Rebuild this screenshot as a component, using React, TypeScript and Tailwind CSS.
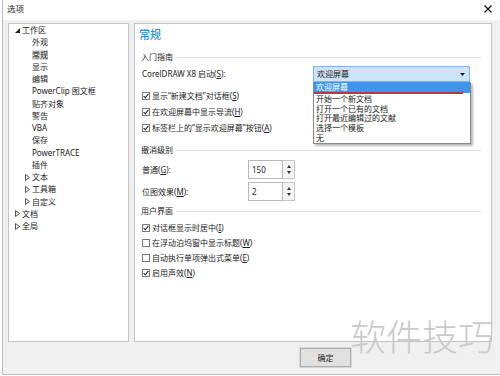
import React from "react";

// ===========================================================

const tree = [
  { label: "工作区", level: 0, icon: "open" },
  { label: "外观", level: 1 },
  { label: "常规", level: 1, selected: true },
  { label: "显示", level: 1 },
  { label: "编辑", level: 1 },
  { label: "PowerClip 图文框", level: 1 },
  { label: "贴齐对象", level: 1 },
  { label: "警告", level: 1 },
  { label: "VBA", level: 1 },
  { label: "保存", level: 1 },
  { label: "PowerTRACE", level: 1 },
  { label: "插件", level: 1 },
  { label: "文本", level: 1, icon: "closed" },
  { label: "工具箱", level: 1, icon: "closed" },
  { label: "自定义", level: 1, icon: "closed" },
  { label: "文档", level: 0, icon: "closed" },
  { label: "全局", level: 0, icon: "closed" },
];

const startItems = ["开始一个新文档", "打开一个已有的文档", "打开最近编辑过的文献", "选择一个模板", "无"];

function TreeIcon({ kind }: { kind?: string }) {
  if (kind === "open")
    return (
      <svg width="5" height="5" viewBox="0 0 5 5" className="mr-[2px]">
        <polygon points="5,0 5,5 0,5" fill="#222" />
      </svg>
    );
  if (kind === "closed")
    return (
      <svg width="5" height="7" viewBox="0 0 5 7" className="mr-[2px]">
        <polygon points="0.5,0.5 4.5,3.5 0.5,6.5" fill="none" stroke="#555" strokeWidth="1" />
      </svg>
    );
  return <span className="w-[5px] mr-[2px]" />;
}

function Check({ checked }: { checked?: boolean }) {
  return (
    <span className="w-[8px] h-[8px] border border-[#7a7a7a] bg-white flex items-center justify-center mr-[2px] shrink-0">
      {checked && (
        <svg width="6" height="6" viewBox="0 0 6 6">
          <path d="M0.6 3.1 L2.3 4.8 L5.4 0.9" fill="none" stroke="#222" strokeWidth="1.1" />
        </svg>
      )}
    </span>
  );
}

function CheckRow({ text, k, checked, h = "h-[16px]" }: { text: string; k: string; checked?: boolean; h?: string }) {
  return (
    <div className={`${h} flex items-center`}>
      <Check checked={checked} />
      <span>
        {text}(<u>{k}</u>)
      </span>
    </div>
  );
}

function Group({ title, cls }: { title: string; cls: string }) {
  return (
    <div className={`${cls} flex items-center -ml-[1px]`}>
      <span className="mr-[3px]">{title}</span>
      <div className="flex-1 h-[1px] bg-[#e2e2e2]" />
    </div>
  );
}

function Spin({ value }: { value: string }) {
  return (
    <div className="w-[47px] h-[19px] flex">
      <div className="w-[35px] h-full border border-[#b9b9b9] bg-white flex items-center pl-[3px]">{value}</div>
      <div className="w-[12px] h-full border border-l-0 border-[#c6c6c6] bg-[#f4f4f4] flex flex-col items-center justify-around py-[2px]">
        <svg width="4" height="3" viewBox="0 0 4 3">
          <polygon points="2,0 4,3 0,3" fill="#333" />
        </svg>
        <svg width="4" height="3" viewBox="0 0 4 3">
          <polygon points="0,0 4,0 2,3" fill="#333" />
        </svg>
      </div>
    </div>
  );
}

export default function App() {
  return (
    <div className="w-[500px] h-[376px] bg-white pl-[2px] pb-[1px] overflow-hidden relative font-['Noto_Sans','Noto_Sans_CJK_SC',sans-serif] text-[8px] text-[#1c1c1c] leading-none">
      <div className="h-full border-l border-b border-[#bdbdbd] flex flex-col">
        {/* title bar */}
        <div className="h-[20px] bg-white flex items-center justify-between pl-[4px] pr-[8px] pb-[2px]">
          <span className="text-[8.5px]">选项</span>
          <svg width="8" height="8" viewBox="0 0 8 8">
            <path d="M0.5 0.5 L7.5 7.5 M7.5 0.5 L0.5 7.5" stroke="#111" strokeWidth="1.2" />
          </svg>
        </div>

        <div className="flex-1 bg-[#f0f0f0] flex flex-col">
          <div className="flex gap-[5px] pl-[5px] pt-[3px]">
            {/* tree */}
            <div className="w-[121px] h-[319px] bg-white border border-[#c4c4c4] flex flex-col">
              {tree.map((t) => (
                <div key={t.label} className={`h-[12.25px] flex items-center ${t.level === 0 ? "pl-[6px]" : "pl-[16px]"}`}>
                  <TreeIcon kind={t.icon} />
                  <span className={t.selected ? "bg-[#dadada] py-[1px]" : ""}>{t.label}</span>
                </div>
              ))}
            </div>

            {/* settings */}
            <div className="w-[358px] h-[319px] bg-white border border-[#c4c4c4] flex flex-col pl-[7px] pr-[10px]">
              <div className="h-[20px] flex items-center -ml-[3px] text-[11px] font-medium text-[#2b8fd6]">常规</div>
              <Group title="入门指南" cls="mt-[4px] h-[18px]" />
              <div className="h-[16px] flex items-center relative">
                <span className="w-[171px]">
                  CorelDRAW X8 启动(<u>S</u>):
                </span>
                <div className="w-[157px] h-[16px] bg-[#cce4f7] border border-[#7cb3e9] flex items-center justify-between pl-[3px] pr-[4px]">
                  <span>欢迎屏幕</span>
                  <svg width="5" height="3" viewBox="0 0 5 3">
                    <polygon points="0,0 5,0 2.5,3" fill="#222" />
                  </svg>
                </div>
                {/* open dropdown list */}
                <div className="absolute left-[171px] top-[16px] w-[158px] h-[62px] bg-white border border-t-0 border-[#8a8a8a] shadow-[2px_2px_2px_rgba(0,0,0,0.28)] flex flex-col z-10">
                  <div className="h-[11px] bg-[#3d96ec] text-white flex items-center pl-[2px] relative">
                    欢迎屏幕
                    <div className="absolute left-0 top-[10px] w-[149px] h-[2px] bg-[#b6394a]" />
                  </div>
                  <div className="h-[1px]" />
                  {startItems.map((s) => (
                    <div key={s} className="h-[10px] flex items-center pl-[2px]">
                      {s}
                    </div>
                  ))}
                </div>
              </div>
              <div className="mt-[6px]" />
              <CheckRow text="显示“新建文档”对话框" k="S" checked />
              <CheckRow text="在欢迎屏幕中显示导流" k="H" checked />
              <CheckRow text="标签栏上的“显示欢迎屏幕”按钮" k="A" checked />

              <Group title="撤消级别" cls="mt-[6px] h-[16px]" />
              <div className="mt-[2px] h-[19px] flex items-center">
                <span className="w-[106px]">
                  普通(<u>G</u>):
                </span>
                <Spin value="150" />
              </div>
              <div className="mt-[3px] h-[19px] flex items-center">
                <span className="w-[106px]">
                  位图效果(<u>M</u>):
                </span>
                <Spin value="2" />
              </div>

              <Group title="用户界面" cls="mt-[2px] h-[16px]" />
              <div className="mt-[1px]" />
              <CheckRow text="对话框显示时居中" k="I" checked h="h-[15px]" />
              <CheckRow text="在浮动泊坞窗中显示标题" k="W" h="h-[15px]" />
              <CheckRow text="自动执行单项弹出式菜单" k="E" h="h-[15px]" />
              <CheckRow text="启用声效" k="N" checked h="h-[15px]" />
            </div>
          </div>

          {/* buttons */}
          <div className="pl-[297px] pt-[6px]">
            <button className="w-[51px] h-[19px] border border-[#adadad] bg-[#e1e1e1] outline outline-1 outline-[#d8d8d8] flex items-center justify-center text-[8px]">
              确定
            </button>
          </div>
        </div>
      </div>

      {/* watermark */}
      <div className="absolute left-[350px] top-[317px] text-[36px] leading-none text-[#cacaca] font-['Noto_Sans_CJK_SC',sans-serif] font-light pointer-events-none">
        软件技巧
      </div>
    </div>
  );
}
